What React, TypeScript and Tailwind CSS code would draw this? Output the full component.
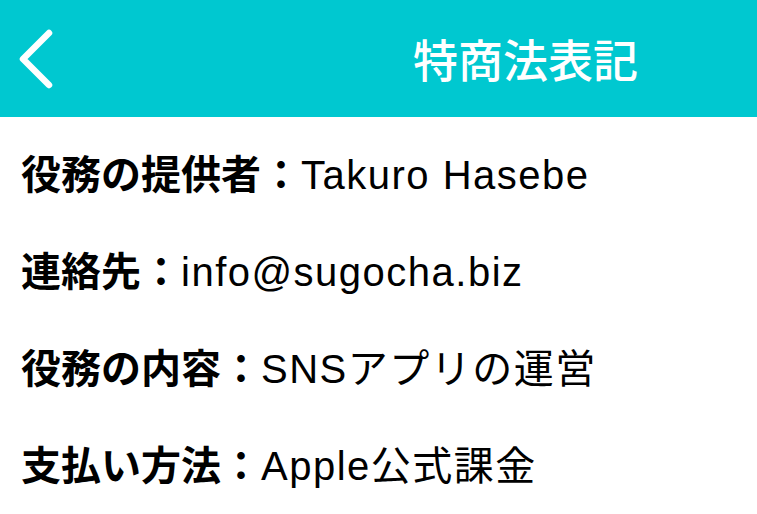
import React from "react";

const rows: [string, string][] = [
  ["役務の提供者：", "Takuro Hasebe"],
  ["連絡先：", "info@sugocha.biz"],
  ["役務の内容：", "SNSアプリの運営"],
  ["支払い方法：", "Apple公式課金"],
];

export default function App() {
  return (
    <div
      className="w-[757px] h-[514px] bg-white overflow-hidden"
      style={{ fontFamily: '"Noto Sans CJK JP", "Noto Sans", sans-serif' }}
    >
      <div className="h-[117px] bg-[#00c8d0] flex items-center">
        <svg className="ml-[15px] w-[40px] h-[64px]" viewBox="0 0 40 64" fill="none">
          <path d="M34 6 L8 32 L34 58" stroke="white" strokeWidth="6.5" strokeLinecap="round" strokeLinejoin="round" />
        </svg>
        <div className="ml-[358px] text-white text-[45px] font-medium leading-none">特商法表記</div>
      </div>
      <div className="pt-[8px] pl-[21px]">
        {rows.map(([k, v]) => (
          <div key={k} className="h-[97px] flex items-center">
            <div className="text-[40px] text-black leading-[1.2] whitespace-nowrap">
              <span className="font-bold">{k}</span>
              <span
                className="font-normal tracking-[1.5px]"
                style={{ fontFamily: '"Liberation Sans", "Noto Sans CJK JP", sans-serif' }}
              >
                {v}
              </span>
            </div>
          </div>
        ))}
      </div>
    </div>
  );
}
